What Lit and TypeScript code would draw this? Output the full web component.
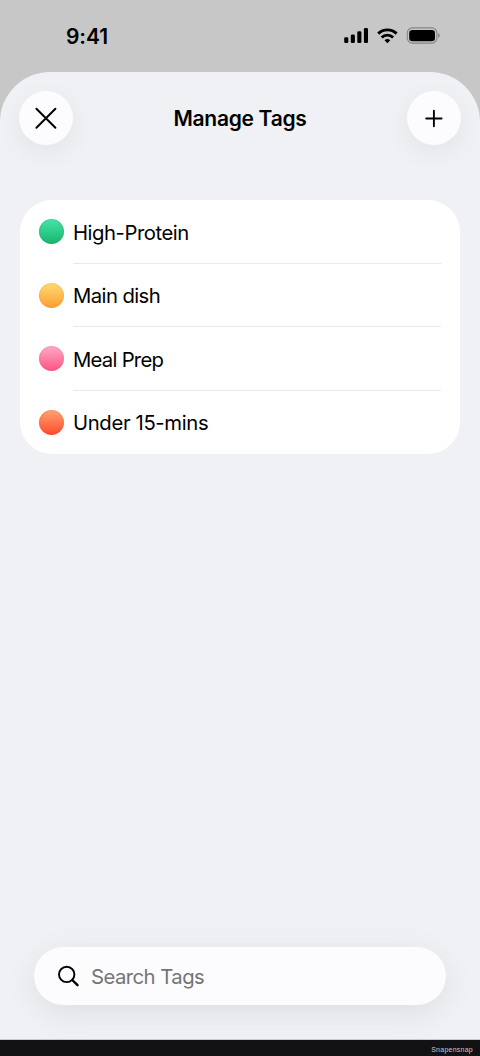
import { LitElement, html, css } from "lit";
import { customElement } from "lit/decorators.js";
import { styleMap } from "lit/directives/style-map.js";

const TAGS = [
  { name: "High-Protein", tone: "green", tracking: -0.46 },
  { name: "Main dish", tone: "amber", tracking: -0.58 },
  { name: "Meal Prep", tone: "pink", tracking: -0.74 },
  { name: "Under 15-mins", tone: "red", tracking: -0.36 },
];

@customElement("status-bar")
class StatusBar extends LitElement {
  static styles = css`
    :host { display: flex; justify-content: space-between; height: 72px; box-sizing: border-box; padding: 24px 40px 0 66px; }
    .time { font-size: 21px; font-weight: 600; line-height: 25px; letter-spacing: -0.1px; }
    svg { display: block; }
  `;
  render() {
    return html`
      <span class="time">9:41</span>
      <svg width="97" height="24" viewBox="343 24 97 24">
        <rect x="344.2" y="37.2" width="4.1" height="5.8" rx="1.3" />
        <rect x="350.8" y="34.6" width="4.1" height="8.4" rx="1.3" />
        <rect x="357.3" y="31.2" width="4.1" height="11.8" rx="1.3" />
        <rect x="363.9" y="28" width="4.1" height="15" rx="1.3" />
        <g fill="none" stroke="#000" stroke-width="2.9">
          <path d="M378.2 33.6a13.1 13.1 0 0 1 18.4 0" />
          <path d="M381.7 37.5a8.1 8.1 0 0 1 11.4 0" />
        </g>
        <path d="M387.4 43.2l-2.9-2.9a4.3 4.3 0 0 1 5.8 0z" />
        <rect x="407.3" y="27.9" width="29.6" height="15.2" rx="5" fill="none" stroke="#858585" stroke-width="1.1" />
        <rect x="409.2" y="29.9" width="25.8" height="11.3" rx="3.3" />
        <path d="M438.2 33.1a2.6 2.6 0 0 1 0 4.8z" fill="#858585" />
      </svg>
    `;
  }
}

@customElement("tag-list")
class TagList extends LitElement {
  static styles = css`
    :host { display: block; background: #fff; border-radius: 32px; height: 254px; box-sizing: border-box; }
    .row { display: flex; align-items: center; height: 63.5px; padding: 0 19px 0 19px; }
    .dot { width: 25px; height: 25px; border-radius: 50%; margin-right: 9px; flex: none; }
    .green { background: linear-gradient(#45e5aa, #18b56c); box-shadow: inset 0 0 2px #139f6490; }
    .amber { background: linear-gradient(#ffdc71, #fd9d32); box-shadow: inset 0 0 2px #ec942790; }
    .pink { background: linear-gradient(#ffabc9, #fe5380); box-shadow: inset 0 0 2px #e9588490; }
    .red { background: linear-gradient(#ffa574, #fc4a29); box-shadow: inset 0 0 2px #e8512f90; }
    .name { flex: 1; height: 100%; box-sizing: border-box; border-bottom: 1.5px solid #e9e9eb; font-size: 20.3px; line-height: 64px; }
    .row:nth-child(odd) .name { line-height: 65px; }
    .row:last-child .name { border-bottom: none; }
  `;
  render() {
    return TAGS.map(
      (t) => html`<div class="row"><span class="dot ${t.tone}"></span><span class="name" style=${styleMap({ letterSpacing: `${t.tracking}px` })}>${t.name}</span></div>`
    );
  }
}

@customElement("app-root")
class AppRoot extends LitElement {
  static styles = css`
    :host { display: flex; flex-direction: column; height: 1056px; background: #c6c7c6; color: #000; font-family: Inter, "Liberation Sans", sans-serif; overflow: hidden; }
    .sheet { flex: 1; display: flex; flex-direction: column; background: #f0f1f5; border-radius: 50px 50px 0 0; overflow: hidden; }
    .header { display: flex; justify-content: space-between; padding: 19.4px 19.4px 0; height: 128px; box-sizing: border-box; }
    .title { margin: 0; font-size: 21px; line-height: 55px; font-weight: 600; letter-spacing: -0.3px; }
    .round { width: 54px; height: 54px; padding: 0; border: none; border-radius: 50%; background: #fcfcff; box-shadow: 0 8px 28px #0000000f; }
    .round svg { display: block; }
    tag-list { margin: 0 20px; }
    .search { display: flex; align-items: center; margin: auto 34px 34px; height: 58.5px; border-radius: 30px; background: #fcfcff; box-shadow: 0 8px 34px #00000014; color: #747476; font-size: 20.3px; line-height: 26px; letter-spacing: -0.54px; }
    .search span { padding-top: 1.5px; }
    .search svg { margin: 1px 11px 0 23px; }
    .footer { height: 17px; background: #121214; border-top: 1px solid #c9c9cb; box-sizing: border-box; display: flex; justify-content: flex-end; padding-right: 7px; color: #c5c5c5; font-size: 7px; line-height: 19px; letter-spacing: 0.25px; font-family: "Liberation Sans", sans-serif; }
  `;
  render() {
    return html`
      <status-bar></status-bar>
      <main class="sheet">
        <header class="header">
          <button class="round" aria-label="Close">
            <svg width="54" height="54" fill="none" stroke="#000" stroke-width="2" stroke-linecap="round"><path d="M17.4 17.7l19 19M36.4 17.7l-19 19" /></svg>
          </button>
          <h1 class="title">Manage Tags</h1>
          <button class="round" aria-label="Add">
            <svg width="54" height="54" fill="none" stroke="#000" stroke-width="1.9" stroke-linecap="round"><path d="M19.2 27.5h15.4M26.9 19.8v15.4" /></svg>
          </button>
        </header>
        <tag-list></tag-list>
        <div class="search">
          <svg width="23" height="23" fill="none" stroke="#000"><circle cx="9.7" cy="9.4" r="7.7" stroke-width="1.9" /><path d="M15.3 15l5.2 5.2" stroke-width="2.4" stroke-linecap="round" /></svg>
          <span>Search Tags</span>
        </div>
      </main>
      <footer class="footer">Snapensnap</footer>
    `;
  }
}
